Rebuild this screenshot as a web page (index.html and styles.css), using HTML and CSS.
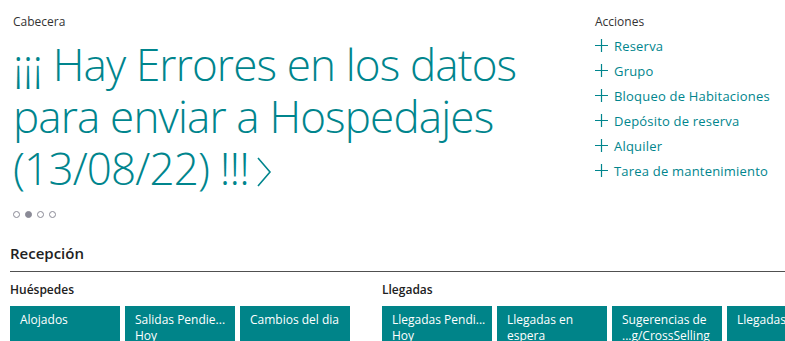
FILE: index.html
```html
<!DOCTYPE html>
<html lang="es">
<head>
    <meta charset="UTF-8">
    <meta name="viewport" content="width=device-width, initial-scale=1.0">
    <title>Role Center</title>
    <link rel="stylesheet" href="styles.css">
</head>
<body>
    <div class="top">
        <div class="cabecera">
            <div class="caption">Cabecera</div>
            <a class="headline" href="#">¡¡¡ Hay Errores en los datos para enviar a Hospedajes (13/08/22) !!!<svg class="chev" width="16" height="30" viewBox="0 0 16 30"><path d="M2 1 L14 15 L2 29" fill="none" stroke="currentColor" stroke-width="1.6"/></svg></a>
            <div class="dots">
                <span class="dot"></span>
                <span class="dot on"></span>
                <span class="dot"></span>
                <span class="dot"></span>
            </div>
        </div>
        <div class="acciones">
            <div class="caption">Acciones</div>
            <a class="accion" href="#"><svg width="13" height="13" viewBox="0 0 13 13"><path d="M6.5 0V13M0 6.5H13" stroke="currentColor" stroke-width="1.2"/></svg>Reserva</a>
            <a class="accion" href="#"><svg width="13" height="13" viewBox="0 0 13 13"><path d="M6.5 0V13M0 6.5H13" stroke="currentColor" stroke-width="1.2"/></svg>Grupo</a>
            <a class="accion" href="#"><svg width="13" height="13" viewBox="0 0 13 13"><path d="M6.5 0V13M0 6.5H13" stroke="currentColor" stroke-width="1.2"/></svg>Bloqueo de Habitaciones</a>
            <a class="accion" href="#"><svg width="13" height="13" viewBox="0 0 13 13"><path d="M6.5 0V13M0 6.5H13" stroke="currentColor" stroke-width="1.2"/></svg>Depósito de reserva</a>
            <a class="accion" href="#"><svg width="13" height="13" viewBox="0 0 13 13"><path d="M6.5 0V13M0 6.5H13" stroke="currentColor" stroke-width="1.2"/></svg>Alquiler</a>
            <a class="accion" href="#"><svg width="13" height="13" viewBox="0 0 13 13"><path d="M6.5 0V13M0 6.5H13" stroke="currentColor" stroke-width="1.2"/></svg>Tarea de mantenimiento</a>
        </div>
    </div>

    <div class="recepcion">
        <h2 class="titulo">Recepción</h2>
        <div class="grupos">
            <div class="grupo">
                <div class="grupo-nombre">Huéspedes</div>
                <div class="tiles">
                    <a class="tile" href="#">Alojados</a>
                    <a class="tile" href="#">Salidas Pendie...<br>Hoy</a>
                    <a class="tile" href="#">Cambios del dia</a>
                </div>
            </div>
            <div class="grupo">
                <div class="grupo-nombre">Llegadas</div>
                <div class="tiles">
                    <a class="tile" href="#">Llegadas Pendi...<br>Hoy</a>
                    <a class="tile" href="#">Llegadas en<br>espera</a>
                    <a class="tile" href="#">Sugerencias de<br>...g/CrossSelling</a>
                    <a class="tile" href="#">Llegadas</a>
                </div>
            </div>
        </div>
    </div>
</body>
</html>
```

FILE: styles.css
```css
*{
    margin: 0;
    padding: 0;
    box-sizing: border-box;
}
body{
    font-family: "Open Sans", "Noto Sans", sans-serif;
    color: #212121;
    background: #fff;
    overflow: hidden;
    width: 785px;
    height: 341px;
}
a{
    text-decoration: none;
}
.top{
    display: flex;
    padding-top: 14px;
}
.cabecera{
    width: 595px;
    padding-left: 13px;
}
.caption{
    font-size: 12px;
    line-height: 16px;
    color: #333;
}
.headline{
    display: block;
    margin-top: 8px;
    font-size: 44px;
    font-weight: 300;
    line-height: 52px;
    letter-spacing: -0.85px;
    color: #00858d;
    width: 540px;
}
.chev{
    margin-left: 7px;
    vertical-align: -2px;
}
.dots{
    display: flex;
    gap: 5px;
    margin-top: 17px;
}
.dot{
    width: 7px;
    height: 7px;
    border-radius: 50%;
    border: 1px solid #8a8a96;
}
.dot.on{
    background: #8a8a96;
}
.acciones{
    display: flex;
    flex-direction: column;
}
.acciones .caption{
    margin-bottom: 3px;
}
.accion{
    display: flex;
    align-items: center;
    gap: 6px;
    height: 25px;
    font-size: 13px;
    letter-spacing: 0.2px;
    color: #00858d;
}
.recepcion{
    padding: 0 0 0 10px;
    margin-top: 25px;
}
.titulo{
    font-size: 15px;
    font-weight: 600;
    line-height: 20px;
    padding-bottom: 8px;
    border-bottom: 1px solid #505050;
}
.grupos{
    display: flex;
    gap: 32px;
    margin-top: 10px;
}
.grupo-nombre{
    font-size: 12px;
    font-weight: 600;
    line-height: 16px;
    margin-bottom: 8px;
}
.tiles{
    display: flex;
    gap: 5px;
}
.tile{
    width: 110px;
    height: 76px;
    flex-shrink: 0;
    background: #008489;
    color: #fff;
    font-size: 12px;
    line-height: 16px;
    padding: 6px 10px;
    overflow: hidden;
    white-space: nowrap;
}
```
